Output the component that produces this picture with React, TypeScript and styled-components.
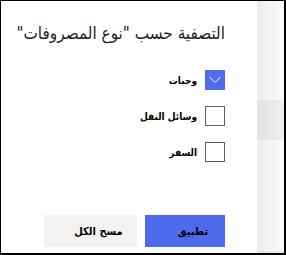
import React, { useState } from "react"
import styled, { createGlobalStyle } from "styled-components"

const GlobalStyle = createGlobalStyle`
  html, body {
    margin: 0;
    padding: 0;
    background: #ffffff;
  }
  * {
    box-sizing: border-box;
  }
`

const options = [
    { id: "meals", label: "وجبات", checked: true },
    { id: "transport", label: "وسائل النقل", checked: false },
    { id: "travel", label: "السفر", checked: false },
]

const App = () => {
    const [items, setItems] = useState(options)

    const toggle = (id: string) => {
        setItems(items.map(item => item.id === id ? { ...item, checked: !item.checked } : item))
    }

    return (
        <>
            <GlobalStyle />
            <Frame>
                <Panel dir="rtl">
                    <Title>التصفية حسب "نوع المصروفات"</Title>
                    <List>
                        {items.map(item => (
                            <Option key={item.id} onClick={() => toggle(item.id)}>
                                <Box $checked={item.checked}>
                                    {item.checked && (
                                        <svg width="12" height="8" viewBox="0 0 12 8">
                                            <polyline points="0.5,1 6,6.5 11.5,1" fill="none" stroke="#ffffff" strokeWidth="1" />
                                        </svg>
                                    )}
                                </Box>
                                <Label>{item.label}</Label>
                            </Option>
                        ))}
                    </List>
                    <Footer>
                        <Button $primary>تطبيق</Button>
                        <Button>مسح الكل</Button>
                    </Footer>
                </Panel>
                <Backdrop>
                    <BackRow $h={99} />
                    <BackRow $h={40} $shade />
                    <BackRow $h={111} />
                    <BackRow $h={2} $shade />
                </Backdrop>
            </Frame>
        </>
    )
}

export default App

const Frame = styled.div`
    width: 286px;
    height: 255px;
    display: flex;
    border-style: solid;
    border-color: #000000;
    border-width: 1px 2px 2px 1px;
    overflow: hidden;
`

const Panel = styled.div`
    width: 256px;
    height: 100%;
    background: #ffffff;
    display: flex;
    flex-direction: column;
    padding: 18px 32px 0 16px;
    font-family: "DejaVu Sans Condensed", "DejaVu Sans", sans-serif;
    font-stretch: condensed;
    color: #201f1e;
    overflow: hidden;
`

const Title = styled.h1`
    margin: 0;
    font-size: 17px;
    font-weight: 400;
    line-height: 28px;
    text-align: right;
    white-space: nowrap;
`

const List = styled.div`
    margin-top: 23px;
    display: flex;
    flex-direction: column;
    gap: 16px;
`

const Option = styled.div`
    display: flex;
    align-items: center;
    gap: 8px;
    height: 20px;
    cursor: pointer;
`

const Box = styled.div<{ $checked?: boolean }>`
    width: 20px;
    height: 20px;
    border: 1px solid ${props => props.$checked ? "#4f6bed" : "#605e5c"};
    background: ${props => props.$checked ? "#4f6bed" : "#ffffff"};
    display: flex;
    align-items: center;
    justify-content: center;
`

const Label = styled.span`
    font-size: 10px;
    font-weight: 700;
    color: #000000;
`

const Footer = styled.div`
    margin-top: auto;
    margin-bottom: 6px;
    display: flex;
    gap: 8px;
`

const Button = styled.button<{ $primary?: boolean }>`
    height: 32px;
    width: ${props => props.$primary ? "80px" : "93px"};
    border: none;
    border-radius: 0;
    background: ${props => props.$primary ? "#4f6bed" : "#f3f2f1"};
    color: #000000;
    font-family: "DejaVu Sans Condensed", "DejaVu Sans", sans-serif;
    font-stretch: condensed;
    font-size: 11px;
    font-weight: 700;
    padding: 0 0 0 16px;
`

const Backdrop = styled.div`
    flex: 1;
    display: flex;
    flex-direction: column;
    position: relative;
    &::after {
        content: "";
        position: absolute;
        inset: 0;
        background: linear-gradient(to right, rgba(0, 0, 0, 0.07), rgba(0, 0, 0, 0.02));
    }
`

const BackRow = styled.div<{ $h: number; $shade?: boolean }>`
    height: ${props => props.$h}px;
    flex-shrink: 0;
    background: ${props => props.$shade ? "#f3f3f3" : "#ffffff"};
`
